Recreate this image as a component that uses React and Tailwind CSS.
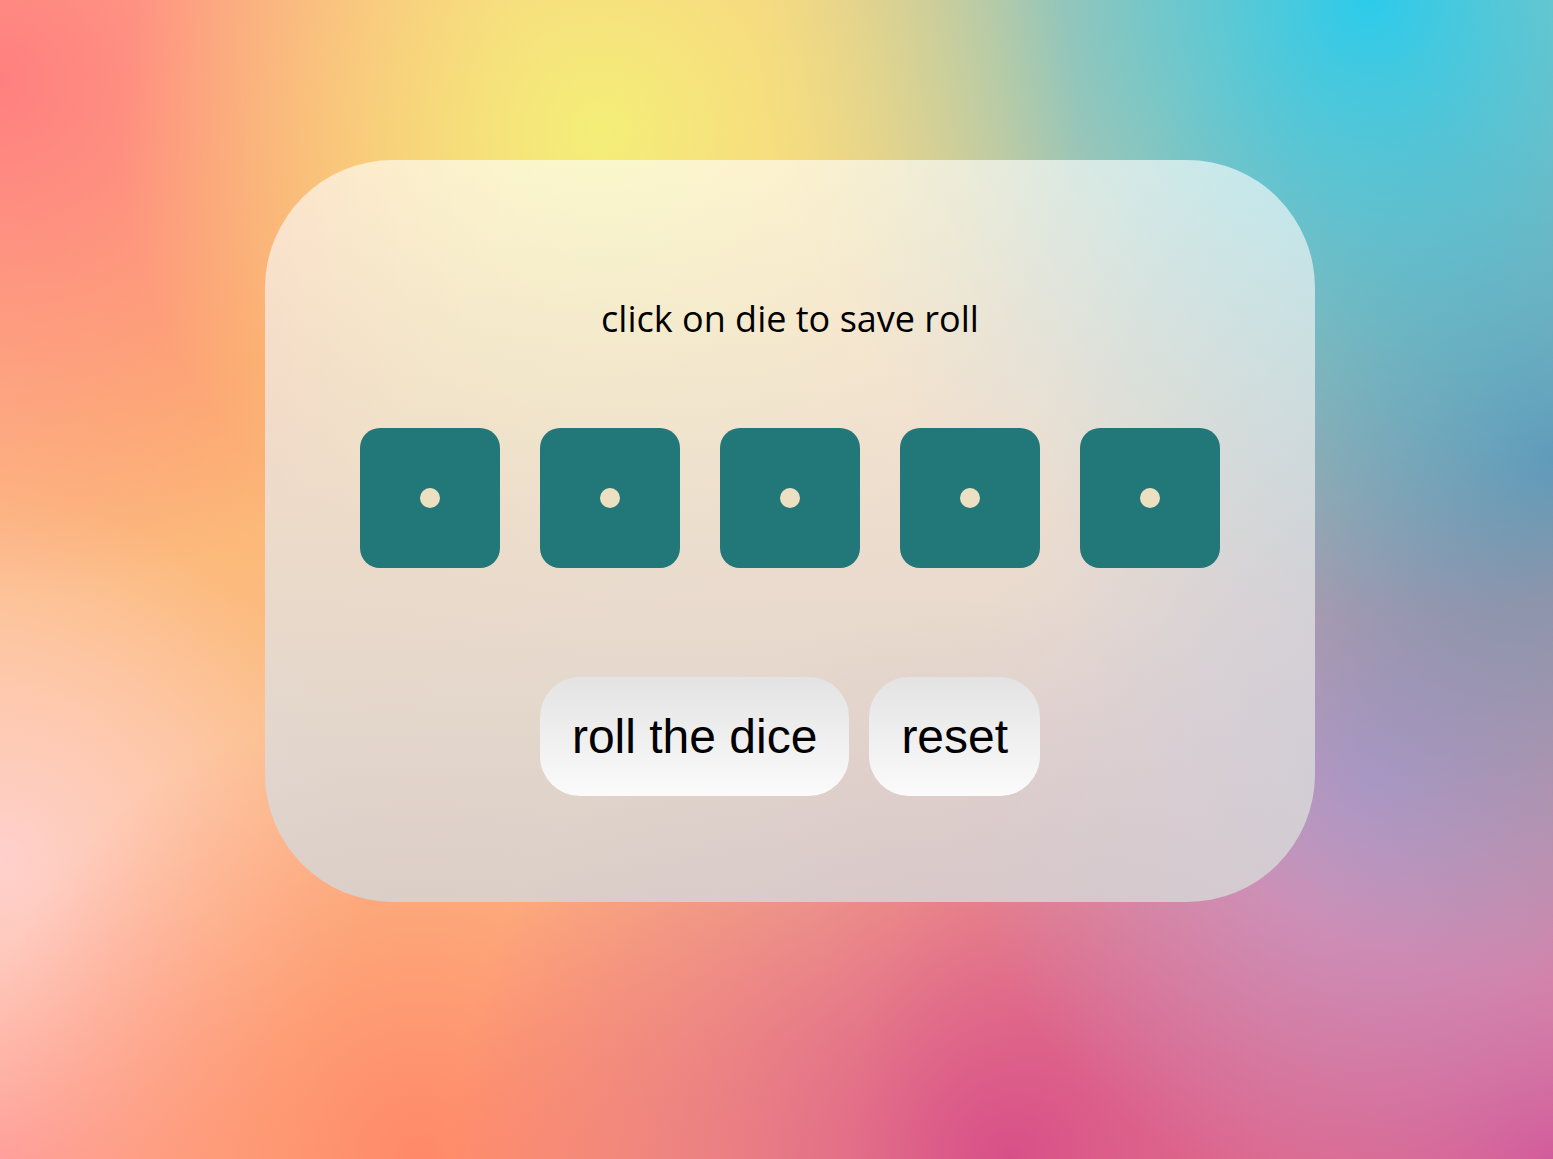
import { useState } from "react";

const bgMesh =
  "bg-[#fcc08a] bg-[radial-gradient(circle_480px_at_600px_130px,#f4ee78,transparent),radial-gradient(circle_620px_at_1370px_0px,#2ccbeb,transparent),radial-gradient(circle_520px_at_0px_80px,#ff7f80,transparent),radial-gradient(circle_520px_at_1553px_460px,#6d8fae,transparent),radial-gradient(circle_420px_at_1370px_780px,#c09acc,transparent),radial-gradient(circle_560px_at_1010px_1159px,#d84f88,transparent),radial-gradient(circle_700px_at_1553px_1159px,#d25c9c,transparent),radial-gradient(circle_460px_at_420px_1159px,#ff8868,transparent),radial-gradient(circle_360px_at_0px_860px,#ffd0cc,transparent),radial-gradient(circle_320px_at_0px_1159px,#ff9898,transparent),radial-gradient(circle_420px_at_280px_360px,#fcb46c,transparent)]";

function Die({ value, held, onClick }) {
  return (
    <button
      onClick={onClick}
      className={`w-[140px] h-[140px] rounded-[20px] flex items-center justify-center ${
        held ? "bg-[#59c3a5]" : "bg-[#227878]"
      }`}
    >
      {value === 1 && <span className="w-5 h-5 rounded-full bg-[#ede0c2]" />}
    </button>
  );
}

export default function App() {
  const [dice, setDice] = useState([
    { id: 1, value: 1, held: false },
    { id: 2, value: 1, held: false },
    { id: 3, value: 1, held: false },
    { id: 4, value: 1, held: false },
    { id: 5, value: 1, held: false },
  ]);

  const toggleHold = (id) => {
    setDice((prev) =>
      prev.map((d) => (d.id === id ? { ...d, held: !d.held } : d))
    );
  };

  const reset = () => {
    setDice((prev) => prev.map((d) => ({ ...d, value: 1, held: false })));
  };

  return (
    <div className={`min-h-screen w-full ${bgMesh} pl-[265px] pt-[160px] pb-[257px]`}>
      {/* Card */}
      <div className="w-[1050px] rounded-[128px] bg-gradient-to-b from-[rgba(255,255,255,0.62)] to-[rgba(213,213,213,0.85)] flex flex-col items-center pt-[134px] pb-[106px]">
        <p className="text-[36px] leading-[49px] text-black font-['Open_Sans',sans-serif]">
          click on die to save roll
        </p>

        {/* Dice */}
        <div className="flex gap-10 mt-[85px]">
          {dice.map((d) => (
            <Die key={d.id} value={d.value} held={d.held} onClick={() => toggleHold(d.id)} />
          ))}
        </div>

        {/* Buttons */}
        <div className="flex gap-5 mt-[109px] font-['Liberation_Sans',Arial,sans-serif]">
          <button className="px-8 py-8 rounded-[40px] bg-gradient-to-b from-[#e3e3e3] to-[#fbfbfb] text-[48px] leading-[55px] text-black">
            roll the dice
          </button>
          <button
            onClick={reset}
            className="px-8 py-8 rounded-[40px] bg-gradient-to-b from-[#e3e3e3] to-[#fbfbfb] text-[48px] leading-[55px] text-black"
          >
            reset
          </button>
        </div>
      </div>
    </div>
  );
}
